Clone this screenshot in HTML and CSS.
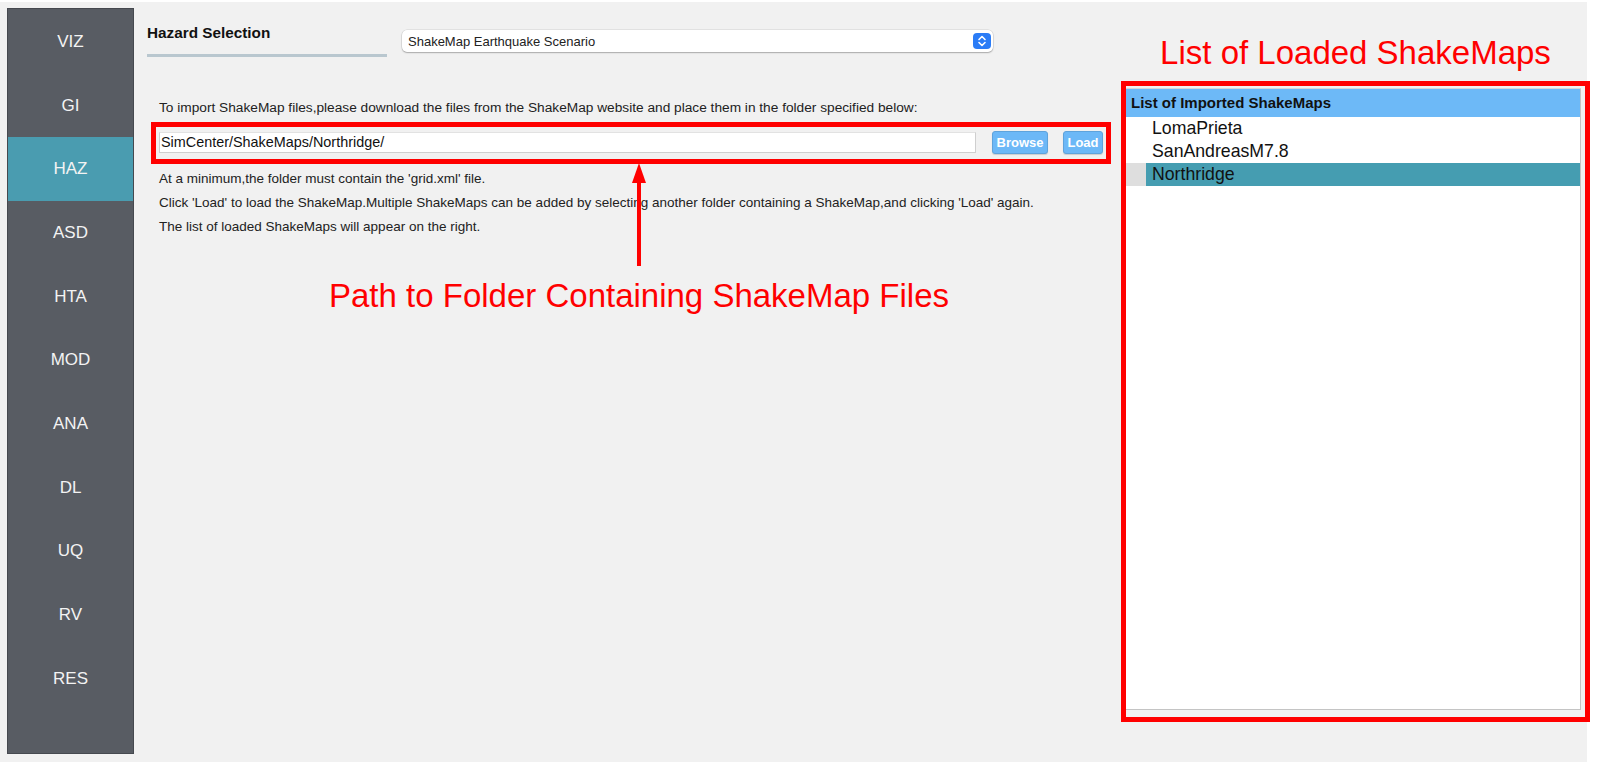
FILE: index.html
```html
<!DOCTYPE html>
<html>
<head>
<meta charset="utf-8">
<title>Hazard Selection - ShakeMap</title>
<link rel="stylesheet" href="styles.css">
</head>
<body>
<div class="window">
  <nav class="sidebar">
    <div class="nav-item">VIZ</div>
    <div class="nav-item">GI</div>
    <div class="nav-item active">HAZ</div>
    <div class="nav-item">ASD</div>
    <div class="nav-item">HTA</div>
    <div class="nav-item">MOD</div>
    <div class="nav-item">ANA</div>
    <div class="nav-item">DL</div>
    <div class="nav-item">UQ</div>
    <div class="nav-item">RV</div>
    <div class="nav-item">RES</div>
  </nav>

  <section class="content">
    <div class="hazard-row">
      <div class="hazard-title">Hazard Selection</div>
      <div class="select">
        <span class="select-text">ShakeMap Earthquake Scenario</span>
        <svg class="stepper" width="18" height="16" viewBox="0 0 18 16">
          <rect x="0" y="0" width="18" height="16" rx="4" fill="#2b7cf6"/>
          <polyline points="6,6.5 9,3.5 12,6.5" fill="none" stroke="#fff" stroke-width="1.6" stroke-linecap="round" stroke-linejoin="round"/>
          <polyline points="6,9.5 9,12.5 12,9.5" fill="none" stroke="#fff" stroke-width="1.6" stroke-linecap="round" stroke-linejoin="round"/>
        </svg>
      </div>
    </div>

    <p class="intro">To import ShakeMap files,please download the files from the ShakeMap website and place them in the folder specified below:</p>

    <div class="path-box">
      <div class="path-input">SimCenter/ShakeMaps/Northridge/</div>
      <button class="btn btn-browse">Browse</button>
      <button class="btn btn-load">Load</button>
    </div>

    <p class="note">At a minimum,the folder must contain the 'grid.xml' file.</p>
    <p class="note">Click 'Load' to load the ShakeMap.Multiple ShakeMaps can be added by selecting another folder containing a ShakeMap,and clicking 'Load' again.</p>
    <p class="note">The list of loaded ShakeMaps will appear on the right.</p>

    <div class="callout">
      <svg class="arrow" width="14" height="103" viewBox="0 0 14 103">
        <polygon points="7,0 0,20 14,20" fill="#ff0000"/>
        <rect x="5" y="18" width="4" height="85" fill="#ff0000"/>
      </svg>
      <div class="callout-label">Path to Folder Containing ShakeMap Files</div>
    </div>
  </section>

  <aside class="right">
    <div class="right-title">List of Loaded ShakeMaps</div>
    <div class="list-frame">
      <div class="list">
        <div class="list-header">List of Imported ShakeMaps</div>
        <div class="list-row"><span class="row-text">LomaPrieta</span></div>
        <div class="list-row"><span class="row-text">SanAndreasM7.8</span></div>
        <div class="list-row selected"><span class="row-text">Northridge</span></div>
      </div>
    </div>
  </aside>
</div>
</body>
</html>
```

FILE: styles.css
```css
html, body {
  margin: 0;
  padding: 0;
  background: #ffffff;
  font-family: "Liberation Sans", Arial, Helvetica, sans-serif;
  color: #1a1a1a;
}

.window {
  margin-top: 2px;
  width: 1587px;
  height: 760px;
  background: #f1f1f1;
  display: flex;
  align-items: flex-start;
}

/* ---------- sidebar ---------- */
.sidebar {
  margin: 6px 0 0 7px;
  width: 127px;
  height: 746px;
  box-sizing: border-box;
  border: 1px solid #46494f;
  background: #585c63;
  padding-top: 1px;
  flex: none;
}

.nav-item {
  height: 63.7px;
  display: flex;
  align-items: center;
  justify-content: center;
  color: #f3f3f3;
  font-size: 17px;
}

.nav-item.active {
  background: #4a9cb0;
}

/* ---------- main content ---------- */
.content {
  flex: 1;
  align-self: stretch;
  position: relative;
  padding-left: 13px;
}

.hazard-row {
  display: flex;
  align-items: flex-start;
  margin-top: 22px;
}

.hazard-title {
  width: 240px;
  font-size: 15.3px;
  font-weight: bold;
  line-height: 18px;
  color: #111;
  padding-bottom: 12px;
  border-bottom: 3px solid #b9c7cf;
}

.select {
  margin-left: 15px;
  margin-top: 6px;
  width: 591px;
  height: 22px;
  box-sizing: border-box;
  background: #ffffff;
  border-radius: 5px;
  box-shadow: 0 0 0 0.5px rgba(0, 0, 0, 0.12), 0 1px 1.5px rgba(0, 0, 0, 0.25);
  display: flex;
  align-items: center;
  padding: 0 2px 0 6px;
}

.select-text {
  flex: 1;
  font-size: 13px;
  color: #222;
}

.stepper {
  display: block;
}

.intro {
  margin: 43px 0 0 12px;
  font-size: 13.7px;
  line-height: 16px;
  color: #222;
}

.path-box {
  margin: 6px 0 0 4px;
  width: 960px;
  box-sizing: border-box;
  border: 5px solid #ff0000;
  padding: 4px 3px 5px 3px;
  display: flex;
  align-items: center;
}

.path-input {
  flex: 1;
  height: 21px;
  box-sizing: border-box;
  background: #ffffff;
  border: 1px solid #cfcfcf;
  border-top-color: #e2e2e2;
  font-size: 14.4px;
  line-height: 19px;
  padding-left: 1px;
  color: #111;
}

.btn {
  height: 23px;
  box-sizing: border-box;
  margin: 0;
  padding: 0;
  background: #6cb8f7;
  border: 1px solid #5ea3dc;
  border-radius: 3px;
  color: #ffffff;
  font-family: "Liberation Sans", Arial, sans-serif;
  font-size: 13px;
  font-weight: bold;
  box-shadow: 0 1px 1px rgba(0, 0, 0, 0.15);
}

.btn-browse {
  width: 56px;
  margin-left: 16px;
}

.btn-load {
  width: 40px;
  margin-left: 15px;
}

.note {
  margin: 0 0 0 12px;
  font-size: 13.5px;
  line-height: 24px;
  color: #222;
}

.path-box + .note {
  margin-top: 3px;
}

/* ---------- callout annotation ---------- */
.callout {
  position: absolute;
  left: 505px;
  top: 161px;
  transform: translateX(-50%);
  display: flex;
  flex-direction: column;
  align-items: center;
}

.arrow {
  display: block;
}

.callout-label {
  margin-top: 11px;
  white-space: nowrap;
  color: #ff0000;
  font-size: 33px;
  line-height: 38px;
}

/* ---------- right panel ---------- */
.right {
  width: 469px;
  margin-right: -3px;
  padding-top: 32px;
  flex: none;
}

.right-title {
  text-align: center;
  color: #ff0000;
  font-size: 33px;
  line-height: 38px;
  white-space: nowrap;
}

.list-frame {
  margin-top: 9px;
  height: 641px;
  box-sizing: border-box;
  border: 5px solid #ff0000;
  padding: 2px 4px 7px 0;
}

.list {
  height: 100%;
  box-sizing: border-box;
  background: #ffffff;
  border: 1px solid #c4c4c4;
  border-top-color: #d8d8d8;
  border-left: none;
}

.list-header {
  height: 28px;
  background: #6db9f7;
  font-size: 15px;
  font-weight: bold;
  line-height: 28px;
  padding-left: 5px;
  color: #111;
}

.list-row {
  height: 23px;
  padding-left: 20px;
  display: flex;
}

.row-text {
  flex: 1;
  padding-left: 6px;
  font-size: 17.7px;
  line-height: 23px;
  color: #111;
}

.list-row.selected {
  background: #dedede;
}

.list-row.selected .row-text {
  background: #459db1;
}
```
